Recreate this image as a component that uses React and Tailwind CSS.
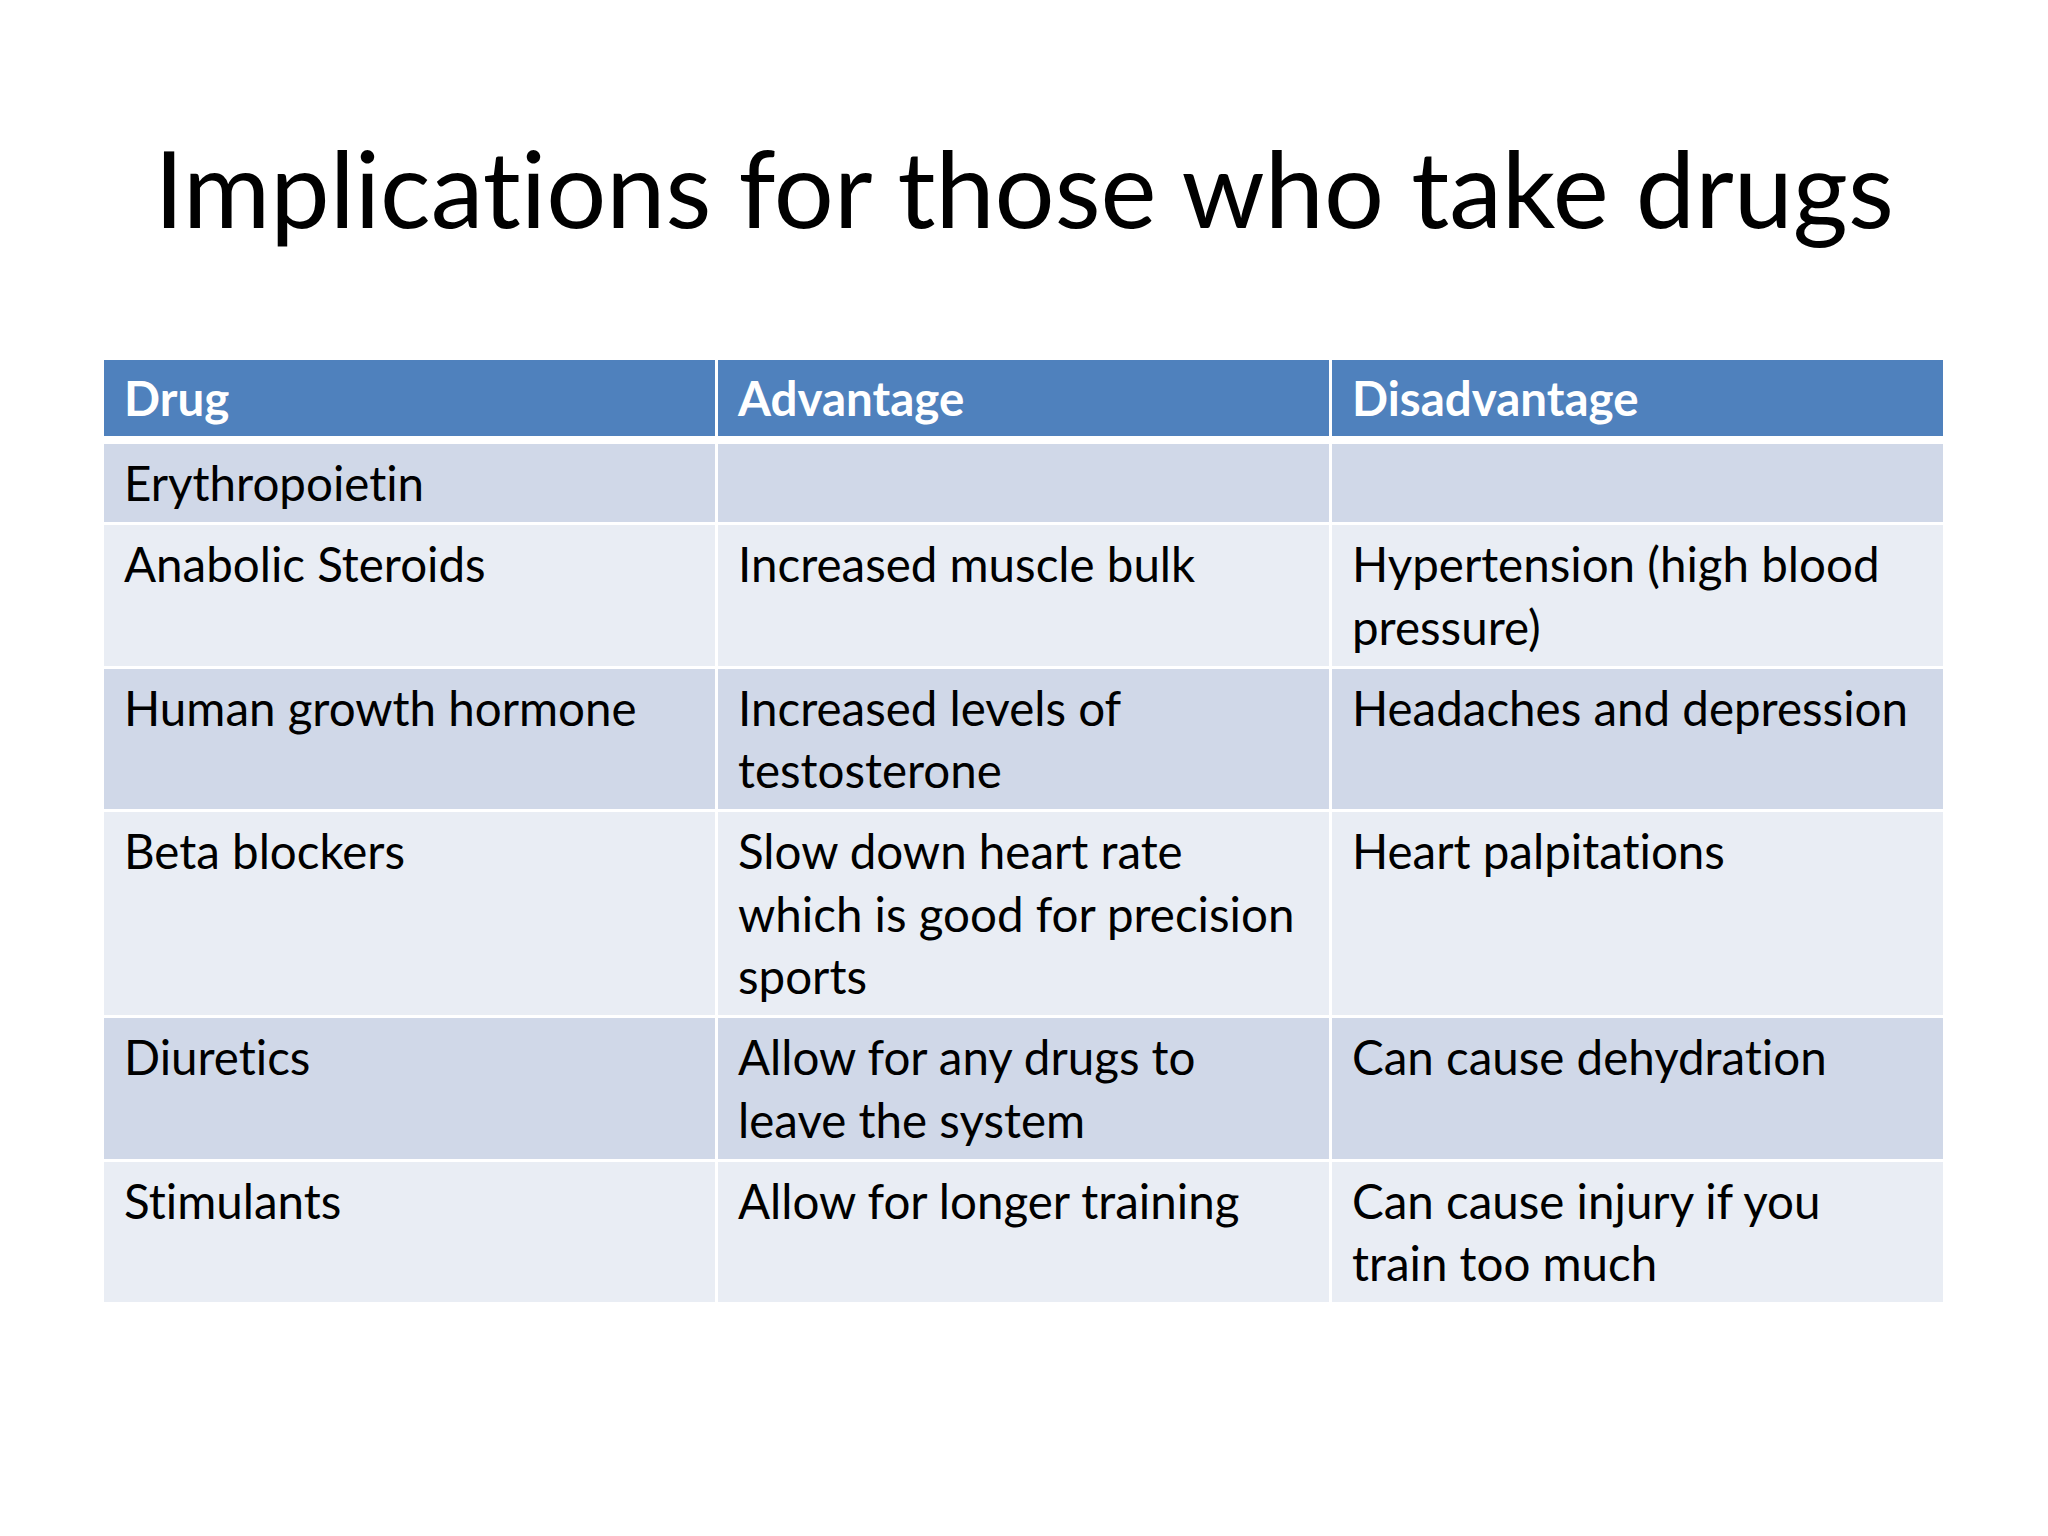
// Slide: Implications for those who take drugs

const rows = [
  { drug: ["Erythropoietin"], adv: [], dis: [] },
  {
    drug: ["Anabolic Steroids"],
    adv: ["Increased muscle bulk"],
    dis: ["Hypertension (high blood", "pressure)"],
  },
  {
    drug: ["Human growth hormone"],
    adv: ["Increased levels of", "testosterone"],
    dis: ["Headaches and depression"],
  },
  {
    drug: ["Beta blockers"],
    adv: ["Slow down heart rate", "which is good for precision", "sports"],
    dis: ["Heart palpitations"],
  },
  {
    drug: ["Diuretics"],
    adv: ["Allow for any drugs to", "leave the system"],
    dis: ["Can cause dehydration"],
  },
  {
    drug: ["Stimulants"],
    adv: ["Allow for longer training"],
    dis: ["Can cause injury if you", "train too much"],
  },
];

function Cell({ lines, bg }) {
  return (
    <div className={`${bg} px-[20px] pt-[8px] pb-[7.5px] text-black`}>
      {lines.length === 0 ? (
        <div className="h-[62.5px]" />
      ) : (
        lines.map((l, i) => (
          <div key={i} className="whitespace-nowrap leading-[62.5px]">
            {l}
          </div>
        ))
      )}
    </div>
  );
}

export default function App() {
  return (
    <div
      className="w-[2048px] h-[1536px] bg-white overflow-hidden [font-variant-ligatures:none]"
      style={{ fontFamily: "Lato, 'Open Sans', sans-serif" }}
    >
      {/* Title */}
      <h1 className="pt-[134px] text-center text-[106px] leading-[106px] text-black font-normal">
        Implications for those who take drugs
      </h1>

      {/* Table */}
      <div className="ml-[104px] mt-[120px] w-[1839px] text-[47.5px]">
        <div className="grid grid-cols-3 gap-x-[3px]">
          <div className="bg-[#4f81bd] px-[20px] h-[76px] pt-[7px] leading-[62px] font-bold text-white">
            Drug
          </div>
          <div className="bg-[#4f81bd] px-[20px] h-[76px] pt-[7px] leading-[62px] font-bold text-white">
            Advantage
          </div>
          <div className="bg-[#4f81bd] px-[20px] h-[76px] pt-[7px] leading-[62px] font-bold text-white">
            Disadvantage
          </div>
        </div>
        <div className="mt-[8px] grid grid-cols-3 gap-x-[3px] gap-y-[3px]">
          {rows.map((r, i) => {
            const bg = i % 2 === 0 ? "bg-[#d0d8e8]" : "bg-[#e9edf4]";
            return [
              <Cell key={`a${i}`} lines={r.drug} bg={bg} />,
              <Cell key={`b${i}`} lines={r.adv} bg={bg} />,
              <Cell key={`c${i}`} lines={r.dis} bg={bg} />,
            ];
          })}
        </div>
      </div>
    </div>
  );
}
